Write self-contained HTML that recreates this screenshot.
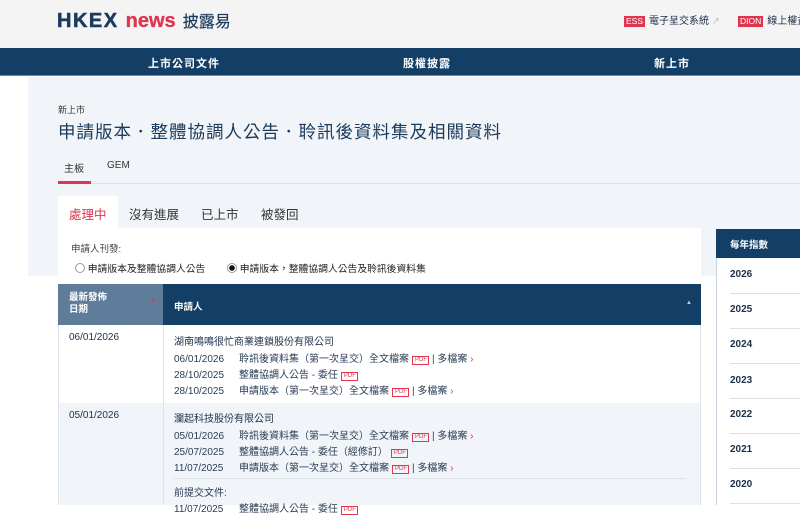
<!DOCTYPE html>
<html><head><meta charset="utf-8"><style>
*{margin:0;padding:0;box-sizing:border-box}
body{width:800px;height:505px;overflow:hidden;background:#fff;font-family:"Liberation Sans","Noto Sans CJK TC",sans-serif;color:#1b2f48;position:relative}
.abs{position:absolute}
.hdr{left:0;top:0;width:800px;height:48px;background:#f4f4f5}
.nav{left:0;top:48px;width:800px;height:28px;background:#133f66;border-bottom:1px solid #6f8aa3}
.nav span{position:absolute;top:7px;color:#fff;font-size:11px;font-weight:bold;letter-spacing:1px}
.hero{left:28px;top:77px;width:772px;height:199px;background:#f1f4f8}
.tag{display:inline-block;background:#e0344f;color:#fff;font-size:8.5px;padding:0 2px;line-height:11px;margin-right:4px}
.cell{font-size:10px;color:#1b2f48}
.pdf{display:inline-block;border:1px solid #e0344f;color:#e0344f;font-size:6px;line-height:7px;padding:0 2px;margin:0 3px;vertical-align:1px;width:17px;text-align:center}
.ln{position:absolute;left:174px;font-size:10px;white-space:nowrap;color:#2a3d55}
.ln b{font-weight:normal;display:inline-block;width:65px}
.gt{color:#e0344f}
.yr{position:absolute;left:730px;font-size:10px;font-weight:bold;color:#1b2f48}
.yl{position:absolute;width:70px;height:1px;background:#d8e0e8}
</style></head><body>
<div class="abs hdr"></div>
<div class="abs" style="left:57px;top:8px;font-size:20px;font-weight:900;letter-spacing:1.5px;color:#1b3a5c;white-space:nowrap;-webkit-text-stroke:0.5px #1b3a5c">HKEX <span style="color:#e0344f;letter-spacing:0;font-weight:bold;-webkit-text-stroke:0.3px #e0344f">news</span> <span style="font-size:16px;font-weight:normal;letter-spacing:0;-webkit-text-stroke:0.2px #1b3a5c">披露易</span></div>
<div class="abs" style="left:624px;top:12px;font-size:10px;white-space:nowrap"><span class="tag">ESS</span>電子呈交系統 <span style="color:#aaa;font-size:8px">↗</span></div>
<div class="abs" style="left:738px;top:12px;font-size:10px;white-space:nowrap"><span class="tag">DION</span>線上權益</div>
<div class="abs nav"><span style="left:148px">上市公司文件</span><span style="left:403px">股權披露</span><span style="left:654px">新上市</span></div>
<div class="abs hero"></div>
<div class="abs" style="left:58px;top:103px;font-size:9px;color:#333">新上市</div>
<div class="abs" style="left:58px;top:119px;font-size:17.5px;color:#1b3a5c;letter-spacing:1px;white-space:nowrap">申請版本．整體協調人公告．聆訊後資料集及相關資料</div>
<div class="abs" style="left:64px;top:160px;font-size:10px;color:#333">主板</div>
<div class="abs" style="left:107px;top:160px;font-size:10px;color:#333">GEM</div>
<div class="abs" style="left:58px;top:183px;width:742px;height:1px;background:#dde3ea"></div>
<div class="abs" style="left:58px;top:181px;width:33px;height:3px;background:#e0344f"></div>
<div class="abs" style="left:58px;top:196px;width:60px;height:32px;background:#fff"></div>
<div class="abs" style="left:69px;top:204px;font-size:12.5px;color:#e0344f">處理中</div>
<div class="abs" style="left:129px;top:204px;font-size:12.5px;color:#333">沒有進展</div>
<div class="abs" style="left:201px;top:204px;font-size:12.5px;color:#333">已上市</div>
<div class="abs" style="left:261px;top:204px;font-size:12.5px;color:#333">被發回</div>
<div class="abs" style="left:58px;top:228px;width:643px;height:56px;background:#fff"></div>
<div class="abs" style="left:71px;top:241px;font-size:9.5px;color:#444">申請人刊發:</div>
<div class="abs" style="left:75px;top:261px;font-size:9.8px;color:#222;white-space:nowrap"><span style="display:inline-block;width:10px;height:10px;border:1px solid #999;border-radius:50%;vertical-align:-1px"></span> 申請版本及整體協調人公告</div>
<div class="abs" style="left:227px;top:261px;font-size:9.8px;color:#222;white-space:nowrap"><span style="display:inline-block;width:10px;height:10px;border:1px solid #999;border-radius:50%;vertical-align:-1px;background:radial-gradient(circle,#111 2.5px,#fff 3px)"></span> 申請版本，整體協調人公告及聆訊後資料集</div>
<div class="abs" style="left:58px;top:284px;width:105px;height:41px;background:#5f7d9b"></div>
<div class="abs" style="left:163px;top:284px;width:538px;height:41px;background:#133f66"></div>
<div class="abs" style="left:69px;top:292px;font-size:9.5px;color:#fff;font-weight:bold;line-height:12px">最新發佈<br>日期</div>
<div class="abs" style="left:150px;top:299px;font-size:6px;color:#e0344f">▼</div>
<div class="abs" style="left:174px;top:299px;font-size:9.5px;color:#fff;font-weight:bold">申請人</div>
<div class="abs" style="left:686px;top:300px;font-size:6px;color:#ccd">▲</div>
<div class="abs" style="left:58px;top:325px;width:643px;height:78px;background:#fff;border-left:1px solid #dde3ea;border-right:1px solid #dde3ea"></div>
<div class="abs" style="left:58px;top:403px;width:643px;height:102px;background:#f1f4f8;border-left:1px solid #dde3ea;border-right:1px solid #dde3ea"></div>
<div class="abs" style="left:163px;top:325px;width:1px;height:180px;background:#dde3ea"></div>
<div class="abs cell" style="left:69px;top:332px">06/01/2026</div>
<div class="abs cell" style="left:69px;top:410px">05/01/2026</div>
<div class="ln" style="top:333px;color:#1b2f48">湖南鳴鳴很忙商業連鎖股份有限公司</div>
<div class="ln" style="top:350px"><b>06/01/2026</b>聆訊後資料集（第一次呈交）全文檔案<span class="pdf">PDF</span>| 多檔案 <span class="gt">›</span></div>
<div class="ln" style="top:366px"><b>28/10/2025</b>整體協調人公告 - 委任<span class="pdf">PDF</span></div>
<div class="ln" style="top:382px"><b>28/10/2025</b>申請版本（第一次呈交）全文檔案<span class="pdf">PDF</span>| 多檔案 <span class="gt">›</span></div>
<div class="ln" style="top:410px;color:#1b2f48">瀾起科技股份有限公司</div>
<div class="ln" style="top:427px"><b>05/01/2026</b>聆訊後資料集（第一次呈交）全文檔案<span class="pdf">PDF</span>| 多檔案 <span class="gt">›</span></div>
<div class="ln" style="top:443px"><b>25/07/2025</b>整體協調人公告 - 委任（經修訂）<span class="pdf">PDF</span></div>
<div class="ln" style="top:459px"><b>11/07/2025</b>申請版本（第一次呈交）全文檔案<span class="pdf">PDF</span>| 多檔案 <span class="gt">›</span></div>
<div class="abs" style="left:174px;top:478px;width:512px;height:1px;background:#dde3ea"></div>
<div class="ln" style="top:484px">前提交文件:</div>
<div class="ln" style="top:500px"><b>11/07/2025</b>整體協調人公告 - 委任<span class="pdf">PDF</span></div>
<div class="abs" style="left:716px;top:229px;width:84px;height:276px;background:#fff;border-left:1px solid #c9d3dd"></div>
<div class="abs" style="left:716px;top:229px;width:84px;height:29px;background:#133f66"></div>
<div class="abs" style="left:730px;top:237px;font-size:9.5px;color:#fff;font-weight:bold">每年指數</div>
<div class="yr" style="top:269px">2026</div><div class="yl" style="left:730px;top:293px"></div>
<div class="yr" style="top:304px">2025</div><div class="yl" style="left:730px;top:328px"></div>
<div class="yr" style="top:339px">2024</div><div class="yl" style="left:730px;top:363px"></div>
<div class="yr" style="top:375px">2023</div><div class="yl" style="left:730px;top:398px"></div>
<div class="yr" style="top:409px">2022</div><div class="yl" style="left:730px;top:433px"></div>
<div class="yr" style="top:444px">2021</div><div class="yl" style="left:730px;top:468px"></div>
<div class="yr" style="top:479px">2020</div><div class="yl" style="left:730px;top:503px"></div>
</body></html>
